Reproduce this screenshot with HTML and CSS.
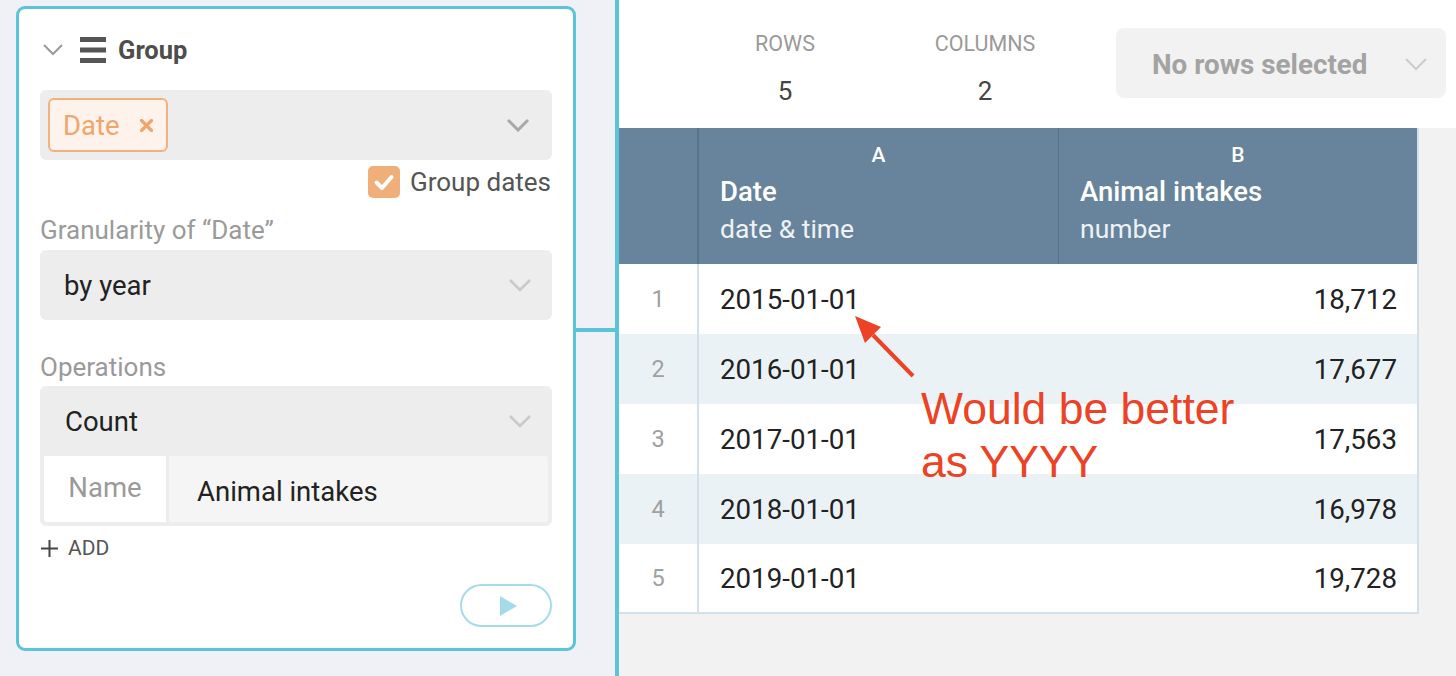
FILE: index.html
```html
<!DOCTYPE html>
<html lang="en">
<head>
<meta charset="utf-8">
<title>Group step</title>
<link rel="stylesheet" href="styles.css">
</head>
<body>
<div class="app">
  <aside class="side">
    <section class="card">
      <header class="step-head">
        <svg class="collapse" width="20" height="12" viewBox="0 0 20 12"><polyline points="1,1 10,10 19,1" fill="none" stroke="#9a9a9a" stroke-width="2"/></svg>
        <svg class="hamb" width="26" height="26" viewBox="0 0 26 26"><rect x="0" y="0" width="26" height="5" fill="#555"/><rect x="0" y="10.5" width="26" height="5" fill="#555"/><rect x="0" y="21" width="26" height="5" fill="#555"/></svg>
        <h2 class="step-title">Group</h2>
      </header>

      <div class="multi">
        <span class="tag">Date<svg class="tag-x" width="13" height="13" viewBox="0 0 13 13"><path d="M1.5 1.5 L11.5 11.5 M11.5 1.5 L1.5 11.5" stroke="#f0a66b" stroke-width="3.2" stroke-linecap="round"/></svg></span>
        <svg class="chev" width="24" height="14" viewBox="0 0 24 14"><polyline points="2,2 12,12 22,2" fill="none" stroke="#a8a8a8" stroke-width="3"/></svg>
      </div>

      <div class="check-row">
        <span class="checkbox"><svg width="32" height="32" viewBox="0 0 32 32"><polyline points="8.5,16.5 14,22 23.5,11" fill="none" stroke="#fff" stroke-width="4" stroke-linecap="round" stroke-linejoin="round"/></svg></span>
        <span class="check-text">Group dates</span>
      </div>

      <div class="field-label">Granularity of “Date”</div>
      <div class="select">
        <span>by year</span>
        <svg class="chev" width="24" height="14" viewBox="0 0 24 14"><polyline points="2,2 12,12 22,2" fill="none" stroke="#c9c9c9" stroke-width="2.5"/></svg>
      </div>

      <div class="field-label ops">Operations</div>
      <div class="op-box">
        <div class="op-select">
          <span>Count</span>
          <svg class="chev" width="24" height="14" viewBox="0 0 24 14"><polyline points="2,2 12,12 22,2" fill="none" stroke="#c9c9c9" stroke-width="2.5"/></svg>
        </div>
        <div class="op-name">
          <span class="name-label">Name</span>
          <span class="name-input">Animal intakes</span>
        </div>
      </div>

      <div class="add">
        <svg width="17" height="17" viewBox="0 0 17 17"><path d="M8.5 0 V17 M0 8.5 H17" stroke="#444" stroke-width="2"/></svg>
        <span>ADD</span>
      </div>

      <div class="run-row">
        <button class="run" type="button"><svg width="17" height="20" viewBox="0 0 17 20"><polygon points="0,0 17,10 0,20" fill="#a3dbe8"/></svg></button>
      </div>
    </section>
    <div class="connector"></div>
  </aside>

  <div class="vline"></div>

  <main class="data">
    <div class="topbar">
      <div class="stat">
        <div class="stat-label">ROWS</div>
        <div class="stat-value">5</div>
      </div>
      <div class="stat">
        <div class="stat-label">COLUMNS</div>
        <div class="stat-value">2</div>
      </div>
      <div class="rows-btn">
        <span>No rows selected</span>
        <svg width="22" height="13" viewBox="0 0 22 13"><polyline points="1,1 11,11 21,1" fill="none" stroke="#cccccc" stroke-width="2"/></svg>
      </div>
    </div>

    <div class="table">
      <div class="thead">
        <div class="th th-num"></div>
        <div class="th th-a">
          <div class="col-letter">A</div>
          <div class="col-name">Date</div>
          <div class="col-type">date &amp; time</div>
        </div>
        <div class="th">
          <div class="col-letter">B</div>
          <div class="col-name">Animal intakes</div>
          <div class="col-type">number</div>
        </div>
      </div>
      <div class="tr"><div class="td-num">1</div><div class="td">2015-01-01</div><div class="td td-right">18,712</div></div>
      <div class="tr alt"><div class="td-num">2</div><div class="td">2016-01-01</div><div class="td td-right">17,677</div></div>
      <div class="tr"><div class="td-num">3</div><div class="td">2017-01-01</div><div class="td td-right">17,563</div></div>
      <div class="tr alt"><div class="td-num">4</div><div class="td">2018-01-01</div><div class="td td-right">16,978</div></div>
      <div class="tr last"><div class="td-num">5</div><div class="td">2019-01-01</div><div class="td td-right">19,728</div></div>
    </div>

    <svg class="arrow" width="837" height="676" viewBox="0 0 837 676">
      <line x1="294" y1="376" x2="254" y2="335" stroke="#ec4226" stroke-width="4"/>
      <polygon points="236,316 262,327 246,343" fill="#ec4226"/>
    </svg>
    <div class="note">Would be better<br>as YYYY</div>
  </main>
</div>
</body>
</html>
```

FILE: styles.css
```css
* { box-sizing: border-box; }

html, body {
  margin: 0;
  padding: 0;
}

body {
  font-family: Roboto, "Noto Sans", sans-serif;
  background: #eff1f7;
  overflow: hidden;
}

.app {
  display: flex;
  width: 1456px;
  height: 676px;
}

/* ---------- left side ---------- */
.side {
  width: 615px;
  flex: none;
  background: #eff1f7;
  display: flex;
  align-items: flex-start;
  padding: 6px 0 0 16px;
}

.card {
  width: 560px;
  height: 645px;
  flex: none;
  background: #fff;
  border: 3px solid #5bc4d8;
  border-radius: 9px;
  padding: 21px 21px 0 21px;
  display: flex;
  flex-direction: column;
}

.connector {
  flex: 1;
  height: 4px;
  margin-top: 322px;
  background: #5bc4d8;
}

.vline {
  width: 4px;
  flex: none;
  background: #5bc4d8;
}

.step-head {
  height: 40px;
  display: flex;
  align-items: center;
}

.collapse {
  margin-left: 3px;
  flex: none;
}

.hamb {
  margin-left: 17px;
  flex: none;
}

.step-title {
  margin: 0 0 0 12px;
  font-size: 25.5px;
  font-weight: 700;
  color: #4d4d4d;
}

.multi {
  margin-top: 20px;
  height: 70px;
  background: #ededed;
  border-radius: 6px;
  padding: 0 22px 0 8px;
  display: flex;
  align-items: center;
  justify-content: space-between;
}

.tag {
  height: 54px;
  border: 2px solid #f1b07c;
  background: #fdf3ec;
  border-radius: 6px;
  padding: 0 13px 0 13px;
  display: flex;
  align-items: center;
  gap: 20px;
  color: #f0a66b;
  font-size: 27.5px;
}

.chev { flex: none; }

.check-row {
  margin-top: 6px;
  height: 32px;
  display: flex;
  justify-content: flex-end;
  align-items: center;
  gap: 10px;
}

.checkbox {
  width: 32px;
  height: 32px;
  border-radius: 5px;
  background: #f0ae78;
  display: flex;
}

.check-text {
  font-size: 26px;
  color: #555;
  margin-right: 1px;
}

.field-label {
  margin-top: 16px;
  line-height: 32px;
  font-size: 26px;
  color: #9a9a9a;
}

.field-label.ops {
  margin-top: 31px;
}

.select {
  margin-top: 4px;
  height: 70px;
  background: #ededed;
  border-radius: 6px;
  padding: 0 20px 0 24px;
  display: flex;
  align-items: center;
  justify-content: space-between;
  font-size: 27.5px;
  color: #222;
}

.op-box {
  margin-top: 3px;
  background: #ededed;
  border-radius: 6px;
  padding: 0 4px 4px 4px;
}

.op-select {
  height: 70px;
  padding: 0 16px 0 21px;
  display: flex;
  align-items: center;
  justify-content: space-between;
  font-size: 27.5px;
  color: #222;
}

.op-name {
  height: 66px;
  display: flex;
  gap: 3px;
}

.name-label {
  width: 122px;
  background: #fff;
  color: #9a9a9a;
  font-size: 27.5px;
  display: flex;
  align-items: center;
  justify-content: center;
  padding-bottom: 3px;
  border-bottom-left-radius: 3px;
}

.name-input {
  flex: 1;
  background: #f5f5f5;
  font-size: 27.5px;
  color: #222;
  display: flex;
  align-items: center;
  padding-left: 28px;
  padding-top: 5px;
  border-radius: 0 3px 3px 0;
}

.add {
  margin-top: 10px;
  height: 24px;
  display: flex;
  align-items: center;
  gap: 10px;
  font-size: 21px;
  color: #555;
}

.add svg {
  margin-left: 1px;
}

.run-row {
  margin-top: 24px;
  display: flex;
  justify-content: flex-end;
}

.run {
  width: 92px;
  height: 43px;
  border: 2px solid #a6dce9;
  border-radius: 22px;
  background: #fff;
  padding: 0 0 0 4px;
  display: flex;
  align-items: center;
  justify-content: center;
}

/* ---------- data side ---------- */
.data {
  flex: 1;
  background: #f2f2f2;
  display: flex;
  flex-direction: column;
  position: relative;
}

.topbar {
  height: 128px;
  flex: none;
  background: #fff;
  display: flex;
  align-items: flex-start;
  padding-left: 66px;
}

.stat {
  width: 200px;
  text-align: center;
  padding-top: 31px;
}

.stat-label {
  font-size: 21.5px;
  line-height: 26px;
  color: #9a9a9a;
}

.stat-value {
  margin-top: 19px;
  font-size: 26px;
  line-height: 30px;
  color: #444;
}

.rows-btn {
  margin-top: 28px;
  margin-left: 31px;
  width: 330px;
  height: 70px;
  background: #f2f2f2;
  border-radius: 8px;
  padding: 2px 19px 0 36px;
  display: flex;
  align-items: center;
  justify-content: space-between;
  font-size: 27.8px;
  font-weight: 700;
  color: #a3a3a3;
}

.table {
  width: 800px;
  border-right: 2px solid #d2e0e9;
  border-bottom: 2px solid #d2e0e9;
  background: #fff;
}

.thead,
.tr {
  display: grid;
  grid-template-columns: 80px 360px 1fr;
}

.thead {
  height: 136px;
  background: #67849c;
  color: #fff;
}

.th {
  padding: 14px 21px 0 21px;
}

.th-num {
  border-right: 2px solid #587288;
}

.th-a {
  border-right: 1px solid #587288;
}

.col-letter {
  text-align: center;
  font-size: 21px;
  font-weight: 500;
  line-height: 26px;
}

.col-name {
  margin-top: 8px;
  font-size: 27.5px;
  font-weight: 500;
  line-height: 32px;
}

.col-type {
  margin-top: 5px;
  font-size: 26.5px;
  line-height: 32px;
  color: #eef2f6;
}

.tr {
  height: 70px;
}

.tr.last {
  height: 68px;
}

.tr.alt {
  background: #ebf2f6;
}

.td-num {
  border-right: 2px solid #d2e0e9;
  display: flex;
  align-items: center;
  justify-content: center;
  font-size: 23.5px;
  color: #a0a0a0;
}

.td {
  display: flex;
  align-items: center;
  padding: 0 20px 0 21px;
  font-size: 27.7px;
  color: #222;
}

.td-right {
  justify-content: flex-end;
}

.arrow {
  position: absolute;
  left: 0;
  top: 0;
  pointer-events: none;
}

.note {
  position: absolute;
  left: 302px;
  top: 382px;
  font-family: "Liberation Sans", Arial, sans-serif;
  font-size: 44.5px;
  line-height: 53px;
  color: #ec4226;
  white-space: nowrap;
}
```
